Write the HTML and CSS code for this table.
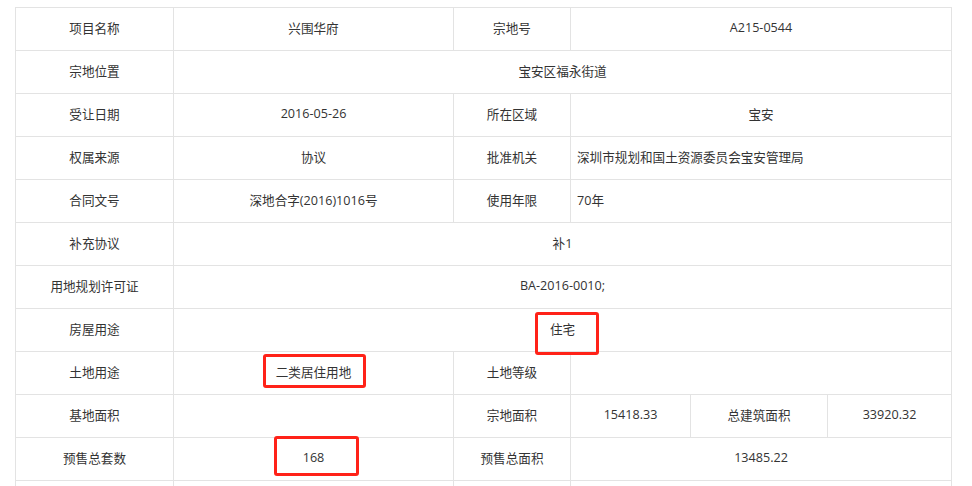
FILE: index.html
```html
<!DOCTYPE html>
<html lang="zh-CN">
<head>
  <meta charset="UTF-8">
  <title>项目信息</title>
  <link rel="stylesheet" href="styles.css">
</head>
<body>
  <div class="sheet">
    <table class="info">
      <colgroup>
        <col class="c-label">
        <col class="c-value">
        <col class="c-label2">
        <col class="c-a">
        <col class="c-b">
        <col class="c-c">
      </colgroup>
      <tr>
        <td>项目名称</td>
        <td>兴围华府</td>
        <td>宗地号</td>
        <td colspan="3">A215-0544</td>
      </tr>
      <tr>
        <td>宗地位置</td>
        <td colspan="5">宝安区福永街道</td>
      </tr>
      <tr>
        <td>受让日期</td>
        <td>2016-05-26</td>
        <td>所在区域</td>
        <td colspan="3">宝安</td>
      </tr>
      <tr>
        <td>权属来源</td>
        <td>协议</td>
        <td>批准机关</td>
        <td colspan="3" class="left">深圳市规划和国土资源委员会宝安管理局</td>
      </tr>
      <tr>
        <td>合同文号</td>
        <td>深地合字(2016)1016号</td>
        <td>使用年限</td>
        <td colspan="3" class="left">70年</td>
      </tr>
      <tr>
        <td>补充协议</td>
        <td colspan="5">补1</td>
      </tr>
      <tr>
        <td>用地规划许可证</td>
        <td colspan="5">BA-2016-0010;</td>
      </tr>
      <tr>
        <td>房屋用途</td>
        <td colspan="5">住宅</td>
      </tr>
      <tr>
        <td>土地用途</td>
        <td>二类居住用地</td>
        <td>土地等级</td>
        <td colspan="3"></td>
      </tr>
      <tr>
        <td>基地面积</td>
        <td></td>
        <td>宗地面积</td>
        <td>15418.33</td>
        <td>总建筑面积</td>
        <td>33920.32</td>
      </tr>
      <tr>
        <td>预售总套数</td>
        <td>168</td>
        <td>预售总面积</td>
        <td colspan="3">13485.22</td>
      </tr>
      <tr>
        <td></td>
        <td></td>
        <td></td>
        <td colspan="3"></td>
      </tr>
    </table>

    <!-- red annotation boxes -->
    <span class="mark mark-house"></span>
    <span class="mark mark-land"></span>
    <span class="mark mark-count"></span>
  </div>
</body>
</html>
```

FILE: styles.css
```css
* {
  padding: 0;
  margin: 0;
  box-sizing: border-box;
}

body {
  font-family: "Open Sans", "Noto Sans CJK SC", sans-serif;
  font-size: 12.6px;
  color: #333;
  background-color: #fff;
  overflow: hidden;
}

.sheet {
  position: relative;
  width: 936px;
  margin: 7px 0 0 15px;
}

.info {
  width: 936px;
  border-collapse: collapse;
  table-layout: fixed;
}

.c-label { width: 158px; }
.c-value { width: 280px; }
.c-label2 { width: 117px; }
.c-a { width: 120px; }
.c-b { width: 137px; }
.c-c { width: 124px; }

.info td {
  height: 43px;
  padding-bottom: 3px;
  border: 1px solid #e3e3e3;
  text-align: center;
  vertical-align: middle;
  white-space: nowrap;
  overflow: hidden;
}

.info td.left {
  text-align: left;
  padding-left: 6px;
}

.mark {
  position: absolute;
  border: 3px solid #ff2218;
  border-radius: 3px;
}

.mark-house {
  left: 520px;
  top: 305px;
  width: 64px;
  height: 43px;
}

.mark-land {
  left: 248px;
  top: 347px;
  width: 103px;
  height: 34px;
}

.mark-count {
  left: 259px;
  top: 429px;
  width: 85px;
  height: 40px;
}
```
